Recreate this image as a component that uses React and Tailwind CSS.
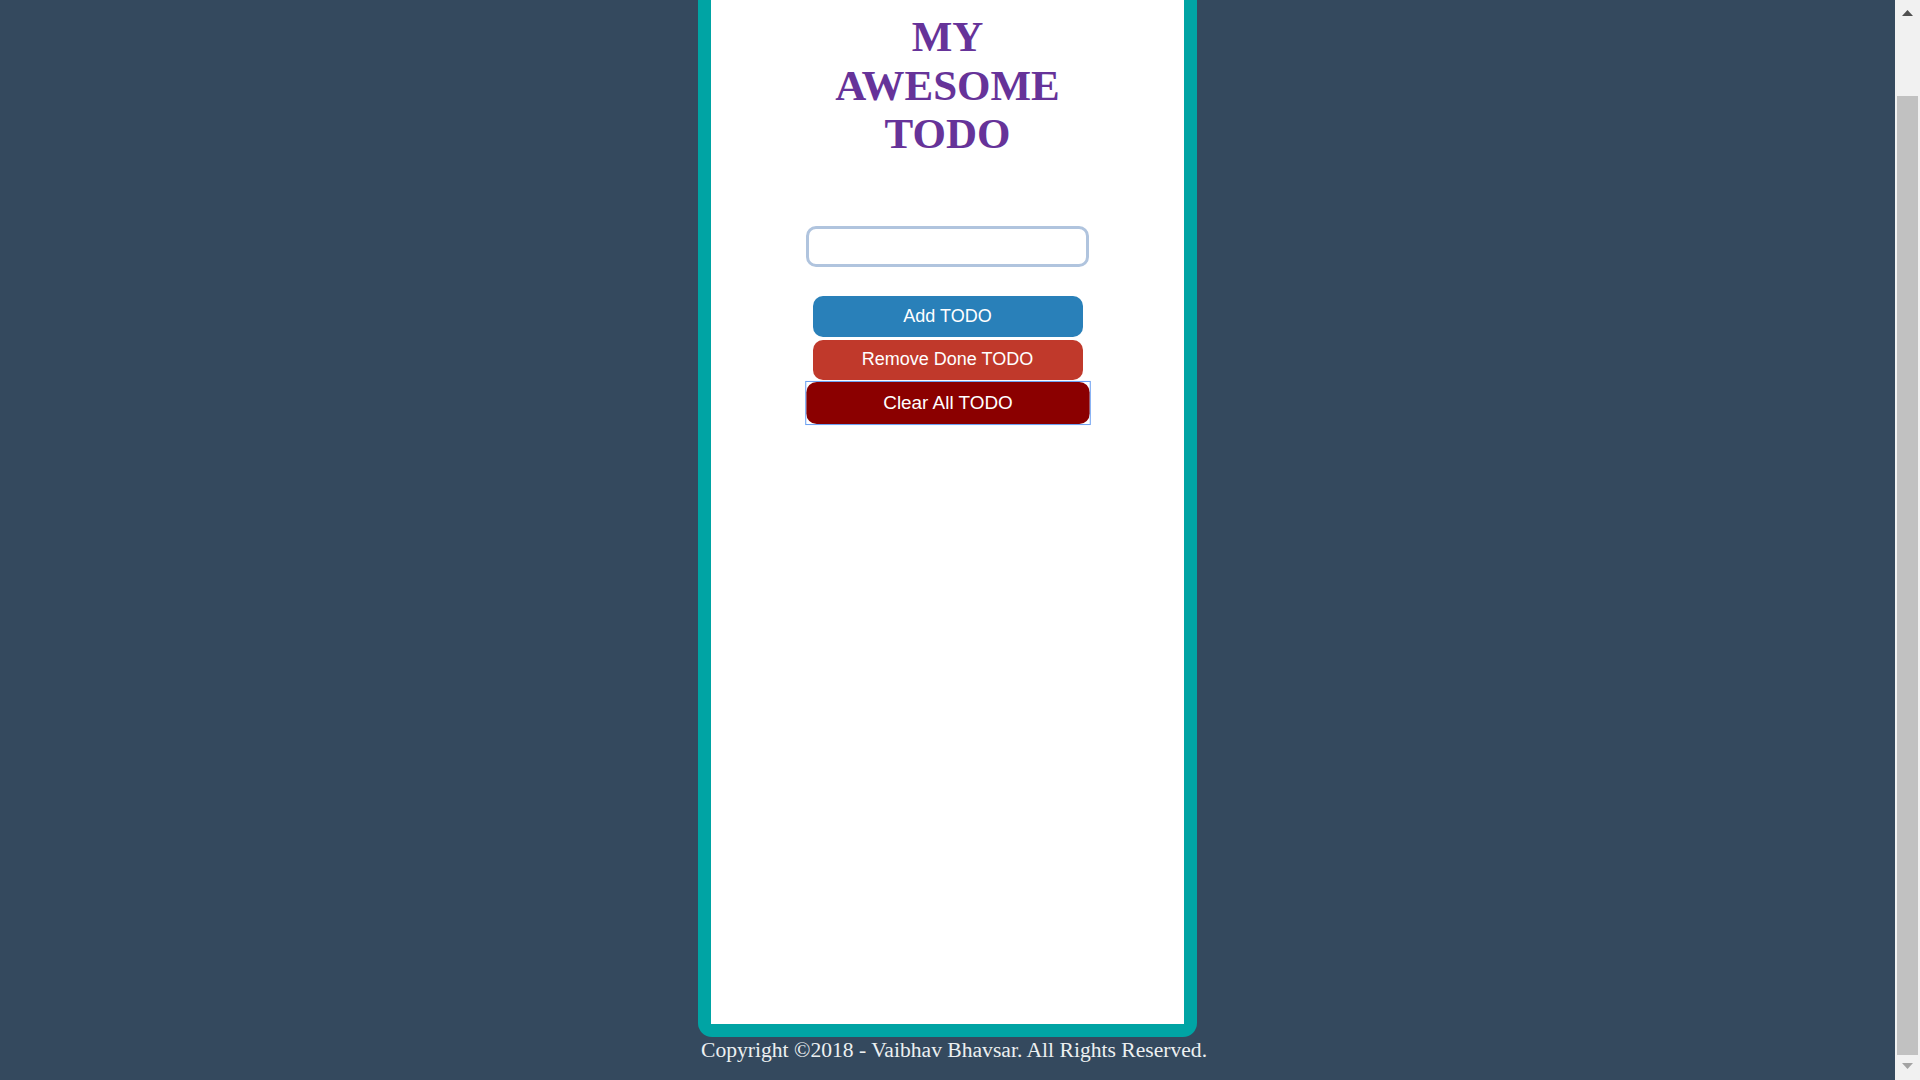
import React from 'react';

function Scrollbar() {
    return (
        <div className="flex flex-col w-[25px] h-full bg-[#f1f1f1]">
            <div className="flex justify-center items-start h-[96px] pt-[10px]">
                <svg width="11" height="6" viewBox="0 0 11 6">
                    <polygon points="0,6 11,6 5.5,0" fill="#505050" />
                </svg>
            </div>
            <div className="flex-1 mx-[2px] bg-[#c1c1c1]"></div>
            <div className="flex justify-center items-start h-[25px] pt-[8px]">
                <svg width="11" height="6" viewBox="0 0 11 6">
                    <polygon points="0,0 11,0 5.5,6" fill="#a3a3a3" />
                </svg>
            </div>
        </div>
    );
}

function App() {
    return (
        <div className="flex flex-row w-full h-[1080px] overflow-hidden bg-[#34495e]">
            <div className="flex-1 flex flex-col items-center">
                <div className="flex flex-col w-[499px]">
                    {/* todo card, page is scrolled so its top edge is off screen */}
                    <div className="flex flex-col items-center w-full h-[1037px] shrink-0 bg-[#00a4a4] px-[13px] pb-[13px] rounded-b-[14px]">
                        <div className="flex flex-col items-center w-full h-full bg-white">
                            <h1 className="w-[260px] mt-[13px] text-center text-[43px] leading-[48.5px] font-bold text-[#663399] font-['Liberation_Serif',serif]">
                                MY AWESOME TODO
                            </h1>
                            <input type="text" className="mt-[67px] w-[283px] h-[41px] border-[3px] border-[#b0c4de] rounded-[10px] bg-white outline-none" />
                            <button className="mt-[29px] w-[270px] h-[41px] rounded-[10px] bg-[#2980b9] text-white text-[18px] font-['Liberation_Sans',Arial,sans-serif]">
                                Add TODO
                            </button>
                            <button className="mt-[3px] w-[270px] h-[40px] rounded-[10px] bg-[#c0392b] text-white text-[18px] font-['Liberation_Sans',Arial,sans-serif]">
                                Remove Done TODO
                            </button>
                            <div className="mt-[3px] scale-[1.05] outline outline-[1.5px] outline-[#6ea2f2]">
                                <button className="block w-[270px] h-[40px] rounded-[10px] bg-[#8b0000] text-white text-[18px] font-['Liberation_Sans',Arial,sans-serif]">
                                    Clear All TODO
                                </button>
                            </div>
                        </div>
                    </div>
                    <p className="mt-[1px] pl-[3px] whitespace-nowrap text-[21.6px] leading-[25px] text-[#ecf0f1] font-['Liberation_Serif',serif]">
                        Copyright ©2018 - Vaibhav Bhavsar. All Rights Reserved.
                    </p>
                </div>
            </div>
            <Scrollbar />
        </div>
    );
}

export default App;
